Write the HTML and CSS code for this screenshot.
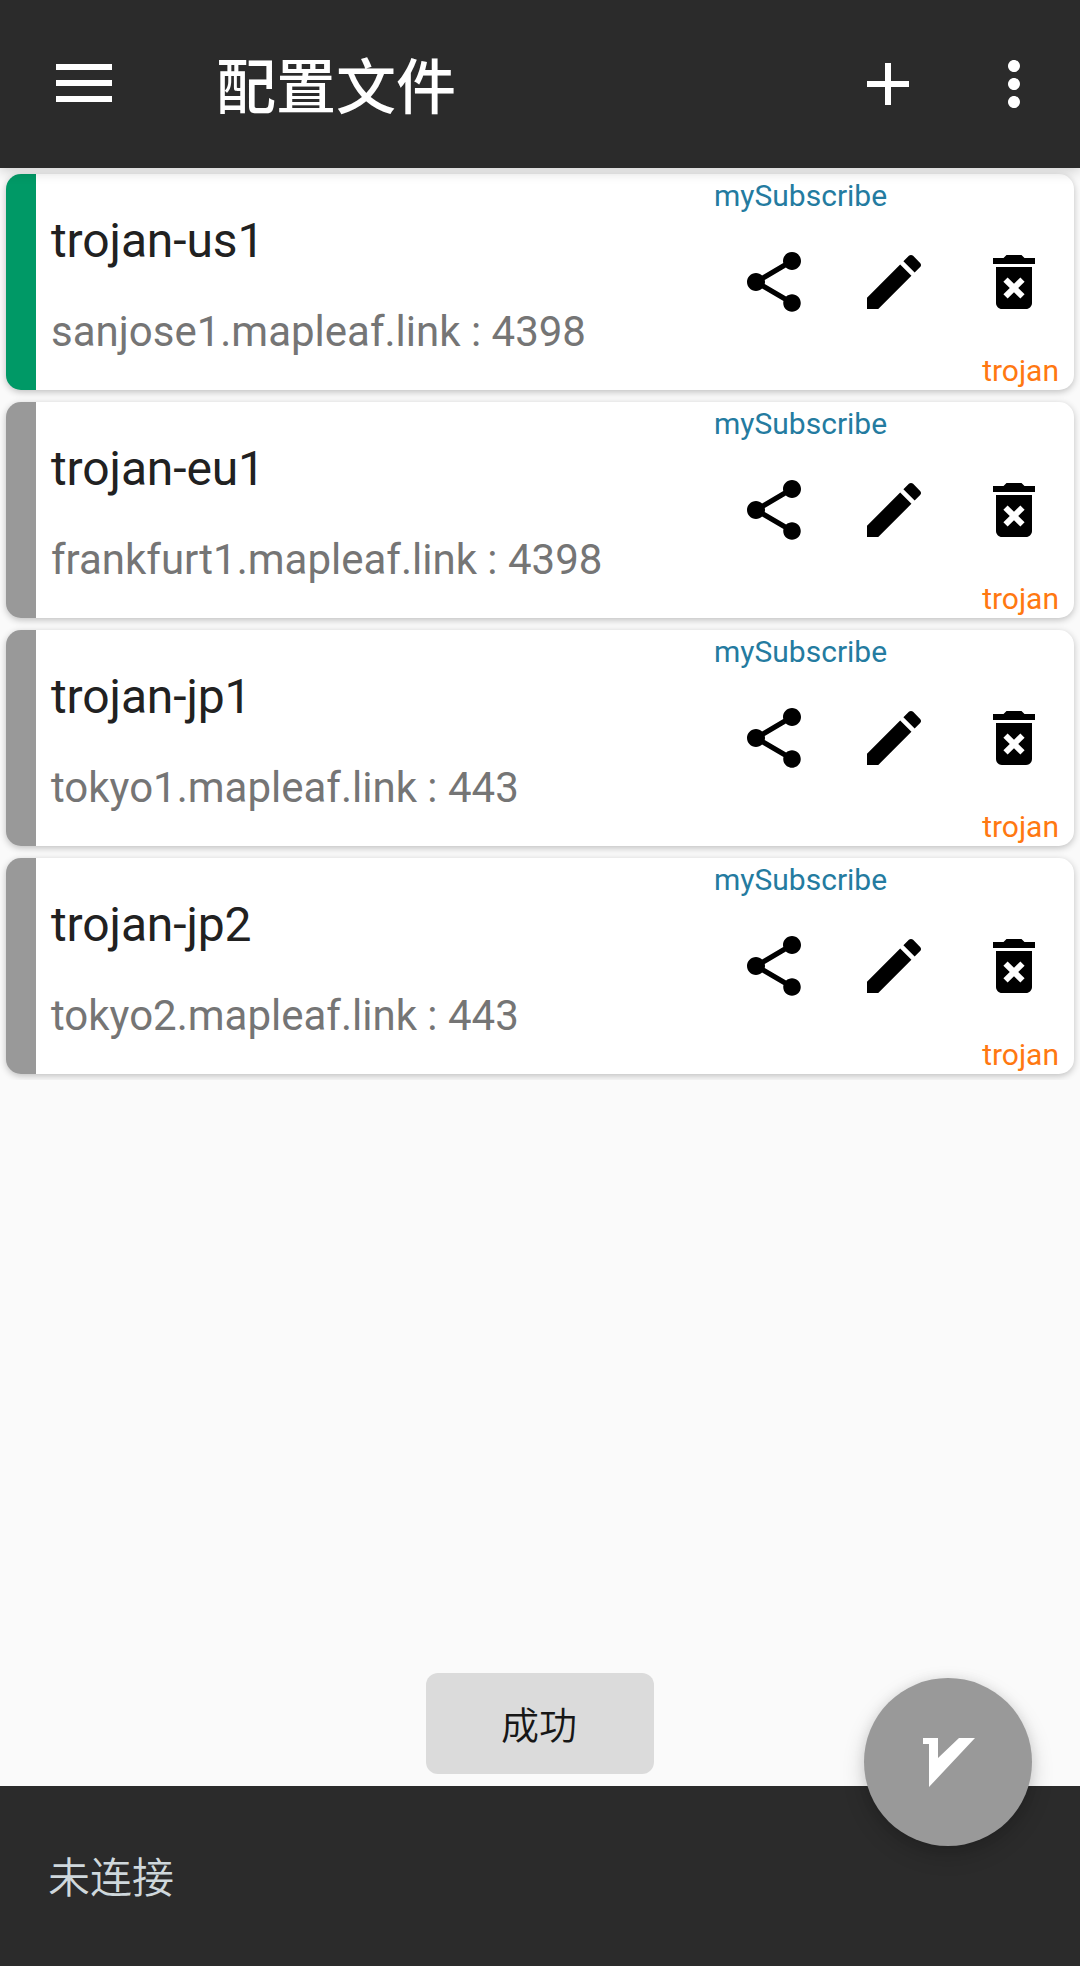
FILE: index.html
```
<!DOCTYPE html>
<html lang="zh-CN">
<head>
    <meta charset="UTF-8">
    <meta name="viewport" content="width=device-width, initial-scale=1.0">
    <title>配置文件</title>
    <link rel="stylesheet" href="styles.css">
</head>
<body>
    <!-- icons shared by every profile card -->
    <svg class="sprite" width="0" height="0">
        <symbol id="icon-share" viewBox="0 0 24 24">
            <path d="M18 16.08c-.76 0-1.44.3-1.96.77L8.91 12.7c.05-.23.09-.46.09-.7s-.04-.47-.09-.7l7.05-4.11c.54.5 1.25.81 2.04.81 1.66 0 3-1.34 3-3s-1.34-3-3-3-3 1.34-3 3c0 .24.04.47.09.7L8.04 9.81C7.5 9.31 6.79 9 6 9c-1.66 0-3 1.34-3 3s1.34 3 3 3c.79 0 1.5-.31 2.04-.81l7.12 4.16c-.05.21-.08.43-.08.65 0 1.61 1.31 2.92 2.92 2.92s2.92-1.31 2.92-2.92-1.31-2.92-2.92-2.92z"/>
        </symbol>
        <symbol id="icon-edit" viewBox="0 0 24 24">
            <path d="M3 17.25V21h3.75L17.81 9.94l-3.75-3.75L3 17.25zM20.71 7.04c.39-.39.39-1.02 0-1.41l-2.34-2.34c-.39-.39-1.02-.39-1.41 0l-1.83 1.83 3.75 3.75 1.83-1.83z"/>
        </symbol>
        <symbol id="icon-delete" viewBox="0 0 24 24">
            <path d="M6 19c0 1.1.9 2 2 2h8c1.1 0 2-.9 2-2V7H6v12zM8.46 11.88l1.41-1.41L12 12.59l2.12-2.12 1.41 1.41L13.41 14l2.12 2.12-1.41 1.41L12 15.41l-2.12 2.12-1.41-1.41L10.59 14l-2.13-2.12zM15.5 4l-1-1h-5l-1 1H5v2h14V4z"/>
        </symbol>
    </svg>

    <header class="toolbar">
        <svg class="icon menu" viewBox="0 0 72 72"><path d="M8 16h56v6H8zM8 32h56v6H8zM8 48h56v6H8z"/></svg>
        <h1>配置文件</h1>
        <svg class="icon" viewBox="0 0 24 24"><path d="M19 13h-6v6h-2v-6H5v-2h6V5h2v6h6v2z"/></svg>
        <svg class="icon more" viewBox="0 0 24 24"><path d="M12 8c1.1 0 2-.9 2-2s-.9-2-2-2-2 .9-2 2 .9 2 2 2zm0 2c-1.1 0-2 .9-2 2s.9 2 2 2 2-.9 2-2-.9-2-2-2zm0 6c-1.1 0-2 .9-2 2s.9 2 2 2 2-.9 2-2-.9-2-2-2z"/></svg>
    </header>

    <main class="content">
        <div class="list">
            <div class="card active">
                <div class="info">
                    <div class="name">trojan-us1</div>
                    <div class="address">sanjose1.mapleaf.link : 4398</div>
                </div>
                <div class="side">
                    <div class="subscribe">mySubscribe</div>
                    <div class="actions">
                        <svg><use href="#icon-share"/></svg>
                        <svg><use href="#icon-edit"/></svg>
                        <svg><use href="#icon-delete"/></svg>
                    </div>
                    <div class="type">trojan</div>
                </div>
            </div>
            <div class="card">
                <div class="info">
                    <div class="name">trojan-eu1</div>
                    <div class="address">frankfurt1.mapleaf.link : 4398</div>
                </div>
                <div class="side">
                    <div class="subscribe">mySubscribe</div>
                    <div class="actions">
                        <svg><use href="#icon-share"/></svg>
                        <svg><use href="#icon-edit"/></svg>
                        <svg><use href="#icon-delete"/></svg>
                    </div>
                    <div class="type">trojan</div>
                </div>
            </div>
            <div class="card">
                <div class="info">
                    <div class="name">trojan-jp1</div>
                    <div class="address">tokyo1.mapleaf.link : 443</div>
                </div>
                <div class="side">
                    <div class="subscribe">mySubscribe</div>
                    <div class="actions">
                        <svg><use href="#icon-share"/></svg>
                        <svg><use href="#icon-edit"/></svg>
                        <svg><use href="#icon-delete"/></svg>
                    </div>
                    <div class="type">trojan</div>
                </div>
            </div>
            <div class="card">
                <div class="info">
                    <div class="name">trojan-jp2</div>
                    <div class="address">tokyo2.mapleaf.link : 443</div>
                </div>
                <div class="side">
                    <div class="subscribe">mySubscribe</div>
                    <div class="actions">
                        <svg><use href="#icon-share"/></svg>
                        <svg><use href="#icon-edit"/></svg>
                        <svg><use href="#icon-delete"/></svg>
                    </div>
                    <div class="type">trojan</div>
                </div>
            </div>
        </div>
        <div class="toast">成功</div>
    </main>

    <footer class="status">
        <span>未连接</span>
        <div class="fab">
            <svg viewBox="0 0 52 50"><path d="M0 0h15v20L36 0h16L6 49V6H0z"/></svg>
        </div>
    </footer>
</body>
</html>
```
FILE: styles.css
```
body {
    margin: 0;
    height: 1966px;
    display: flex;
    flex-direction: column;
    background-color: #fafafa;
    font-family: Roboto, "Noto Sans CJK SC", sans-serif;
    overflow: hidden;
}

.sprite {
    position: absolute;
}

/* top bar */
.toolbar {
    height: 168px;
    flex: none;
    box-sizing: border-box;
    padding: 0 30px 0 48px;
    display: flex;
    align-items: center;
    background-color: #2b2b2b;
    color: #fff;
    box-shadow: 0 4px 12px rgba(0, 0, 0, 0.16);
    z-index: 1;
}
.toolbar h1 {
    flex: 1;
    margin: 0 0 0 96px;
    padding-top: 9px;
    font-size: 60px;
    font-weight: 500;
    line-height: 84px;
}
.icon {
    width: 72px;
    height: 72px;
    fill: #fff;
}
.icon.more {
    margin-left: 54px;
}

/* profile list */
.content {
    flex: 1;
    display: flex;
    flex-direction: column;
    justify-content: space-between;
    align-items: center;
    padding-bottom: 12px;
}
.list {
    align-self: stretch;
    display: flex;
    flex-direction: column;
    gap: 12px;
    padding: 6px;
    overflow: hidden;
}
.card {
    height: 216px;
    box-sizing: border-box;
    display: flex;
    justify-content: space-between;
    border-left: 30px solid #999;
    border-radius: 15px;
    background-color: #fff;
    box-shadow: 0 2px 7px rgba(0, 0, 0, 0.24);
}
.card.active {
    border-left-color: #009966;
}
.info {
    padding: 37px 0 0 15px;
}
.name {
    font-size: 48px;
    line-height: 60px;
    letter-spacing: -0.12px;
    color: #212121;
}
.address {
    margin-top: 36px;
    font-size: 42px;
    line-height: 50px;
    color: #757575;
}
.side {
    width: 360px;
    font-size: 30px;
    line-height: 36px;
}
.subscribe {
    padding-top: 4px;
    color: #247ba0;
}
.actions {
    display: flex;
    gap: 48px;
    padding: 32px 0 0 24px;
}
.actions svg {
    width: 72px;
    height: 72px;
}
.type {
    padding: 35px 15px 0 0;
    text-align: right;
    color: #ff7811;
}

.toast {
    width: 228px;
    height: 101px;
    box-sizing: border-box;
    padding-right: 2px;
    border-radius: 12px;
    background-color: #dbdbdb;
    color: #171717;
    font-size: 38px;
    font-weight: 350;
    line-height: 106px;
    text-align: center;
}

/* connection status */
.status {
    position: relative;
    height: 180px;
    flex: none;
    box-sizing: border-box;
    padding: 0 48px 3px;
    display: flex;
    align-items: center;
    background-color: #2b2b2b;
    color: #cfd8dc;
    font-size: 42px;
    font-weight: 350;
}
.fab {
    position: absolute;
    top: -108px;
    right: 48px;
    width: 168px;
    height: 168px;
    box-sizing: border-box;
    padding: 2px 0 0 2px;
    border-radius: 50%;
    display: flex;
    align-items: center;
    justify-content: center;
    background-color: #999;
    box-shadow: 0 9px 22px rgba(0, 0, 0, 0.18), 0 0 12px rgba(0, 0, 0, 0.08);
}
.fab svg {
    width: 52px;
    height: 50px;
    fill: #fff;
}
```
